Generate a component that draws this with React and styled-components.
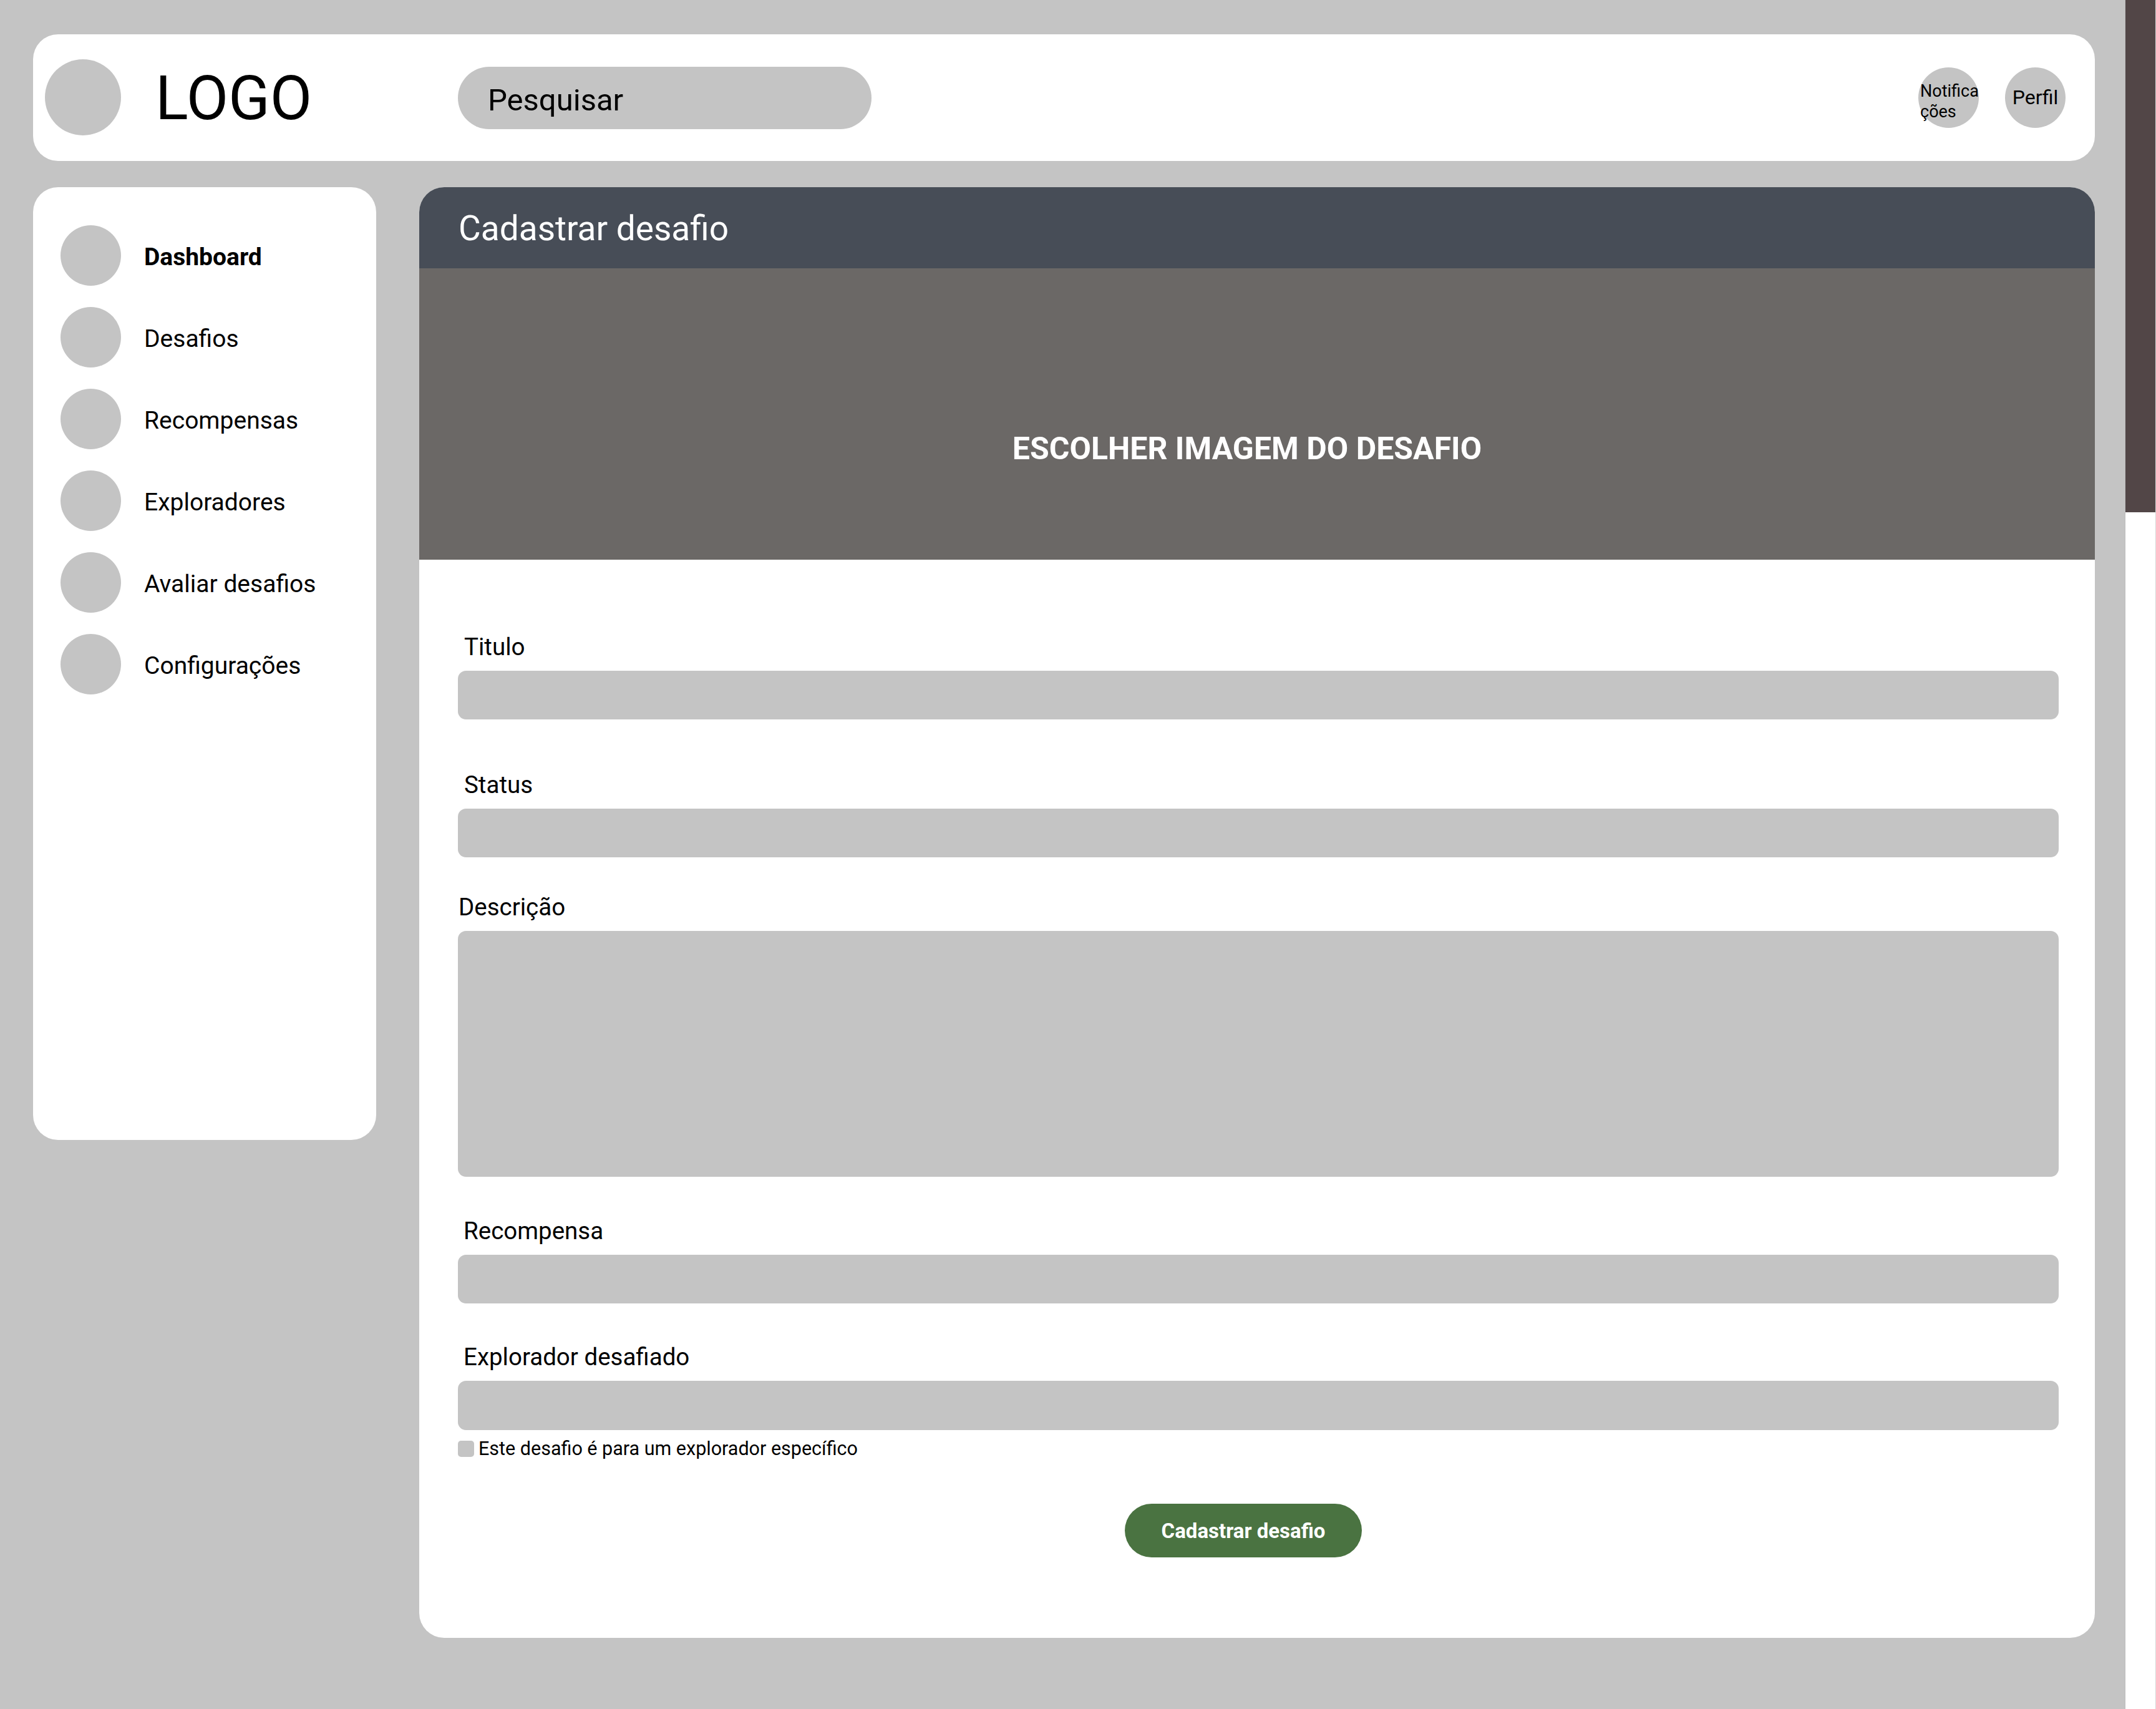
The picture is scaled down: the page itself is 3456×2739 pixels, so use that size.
import styled, { createGlobalStyle } from 'styled-components';

const GlobalStyle = createGlobalStyle`
  * { box-sizing: border-box; }
  body {
    margin: 0;
    font-family: Roboto, "Noto Sans", "Liberation Sans", sans-serif;
    color: #000000;
    background: #ffffff;
  }
`;

const menuItems = [
  { label: 'Dashboard', active: true },
  { label: 'Desafios' },
  { label: 'Recompensas' },
  { label: 'Exploradores' },
  { label: 'Avaliar desafios' },
  { label: 'Configurações' },
];

export default function App() {
  return (
    <>
      <GlobalStyle />
      <StyledPage>
        <StyledMain>
          <StyledTopBar>
            <StyledBrand>
              <StyledLogoCircle />
              <StyledLogoText>LOGO</StyledLogoText>
            </StyledBrand>
            <StyledSearch>Pesquisar</StyledSearch>
            <StyledActions>
              <StyledActionCircle $small>
                Notifica
                <br />
                ções
              </StyledActionCircle>
              <StyledActionCircle $center>Perfil</StyledActionCircle>
            </StyledActions>
          </StyledTopBar>

          <StyledBody>
            <StyledSidebar>
              {menuItems.map((item) => (
                <StyledMenuItem key={item.label} $active={item.active}>
                  <span className="menu-icon" />
                  <span className="menu-label">{item.label}</span>
                </StyledMenuItem>
              ))}
            </StyledSidebar>

            <StyledPanel>
              <StyledPanelHeader>Cadastrar desafio</StyledPanelHeader>
              <StyledImagePicker>ESCOLHER IMAGEM DO DESAFIO</StyledImagePicker>
              <StyledForm>
                <StyledField $top={118}>
                  <StyledLabel $indent={10}>Titulo</StyledLabel>
                  <StyledInput />
                </StyledField>
                <StyledField $top={83}>
                  <StyledLabel $indent={10}>Status</StyledLabel>
                  <StyledInput />
                </StyledField>
                <StyledField $top={58}>
                  <StyledLabel $indent={1}>Descrição</StyledLabel>
                  <StyledInput $height={394} />
                </StyledField>
                <StyledField $top={65}>
                  <StyledLabel $indent={9}>Recompensa</StyledLabel>
                  <StyledInput />
                </StyledField>
                <StyledField $top={64}>
                  <StyledLabel $indent={9}>Explorador desafiado</StyledLabel>
                  <StyledInput $height={79} />
                </StyledField>
                <StyledCheckRow>
                  <span className="check-box" />
                  Este desafio é para um explorador específico
                </StyledCheckRow>
                <StyledButtonRow>
                  <StyledSubmit>Cadastrar desafio</StyledSubmit>
                </StyledButtonRow>
              </StyledForm>
            </StyledPanel>
          </StyledBody>
        </StyledMain>

        <StyledScrollTrack>
          <span className="thumb" />
        </StyledScrollTrack>
      </StyledPage>
    </>
  );
}

const StyledPage = styled.div`
  display: flex;
  width: 100%;
  height: 2739px;
  overflow: hidden;
`;

const StyledMain = styled.div`
  flex: 1;
  background: #c4c4c4;
  padding: 55px 48px 0 53px;
`;

const StyledTopBar = styled.header`
  height: 203px;
  background: #ffffff;
  border-radius: 40px;
  display: flex;
  align-items: center;
  padding: 0 47px 0 19px;
`;

const StyledBrand = styled.div`
  width: 662px;
  flex-shrink: 0;
  display: flex;
  align-items: center;
  gap: 55px;
`;

const StyledLogoCircle = styled.div`
  width: 122px;
  height: 122px;
  border-radius: 50%;
  background: #c4c4c4;
  margin-top: -2px;
`;

const StyledLogoText = styled.span`
  font-size: 98px;
  line-height: 1;
  font-weight: 400;
  margin-top: 2px;
`;

const StyledSearch = styled.div`
  width: 663px;
  height: 100px;
  border-radius: 50px;
  background: #c4c4c4;
  display: flex;
  align-items: center;
  padding: 8px 0 0 48px;
  font-size: 49px;
`;

const StyledActions = styled.div`
  margin-left: auto;
  display: flex;
  align-items: center;
  gap: 42px;
`;

const StyledActionCircle = styled.div`
  width: 97px;
  height: 97px;
  border-radius: 50%;
  background: #c4c4c4;
  display: flex;
  align-items: center;
  justify-content: ${(p) => (p.$center ? 'center' : 'flex-start')};
  white-space: nowrap;
  font-size: ${(p) => (p.$small ? '27px' : '32px')};
  line-height: ${(p) => (p.$small ? '33px' : '1')};
  padding: ${(p) => (p.$small ? '12px 0 0 3px' : '0 0 2px 0')};
`;

const StyledBody = styled.div`
  display: flex;
  align-items: flex-start;
  gap: 69px;
  margin-top: 42px;
`;

const StyledSidebar = styled.nav`
  width: 550px;
  height: 1527px;
  flex-shrink: 0;
  background: #ffffff;
  border-radius: 40px;
  padding: 61px 0 0 44px;
  display: flex;
  flex-direction: column;
  gap: 34px;
`;

const StyledMenuItem = styled.div`
  display: flex;
  align-items: center;
  gap: 38px;
  height: 97px;
  font-size: 39px;
  font-weight: ${(p) => (p.$active ? 700 : 400)};
  .menu-icon {
    width: 97px;
    height: 97px;
    border-radius: 50%;
    background: #c4c4c4;
    flex-shrink: 0;
  }
  .menu-label {
    padding-top: 4px;
    margin-left: -1px;
  }
`;

const StyledPanel = styled.section`
  flex: 1;
  height: 2325px;
  background: #ffffff;
  border-radius: 40px;
  overflow: hidden;
`;

const StyledPanelHeader = styled.h1`
  margin: 0;
  height: 130px;
  background: #474d57;
  color: #ffffff;
  display: flex;
  align-items: center;
  padding: 2px 0 0 63px;
  font-size: 55px;
  font-weight: 400;
`;

const StyledImagePicker = styled.div`
  height: 467px;
  background: #6b6866;
  color: #ffffff;
  display: flex;
  align-items: center;
  justify-content: center;
  padding: 110px 32px 0 0;
  font-size: 50px;
  font-weight: 700;
`;

const StyledForm = styled.form`
  padding: 0 58px 0 62px;
  display: flex;
  flex-direction: column;
`;

const StyledField = styled.div`
  display: flex;
  flex-direction: column;
  gap: 16px;
  margin-top: ${(p) => p.$top}px;
`;

const StyledLabel = styled.label`
  font-size: 38.5px;
  line-height: 44px;
  padding-left: ${(p) => p.$indent}px;
`;

const StyledInput = styled.div`
  height: ${(p) => p.$height || 78}px;
  background: #c4c4c4;
  border-radius: 13px;
`;

const StyledCheckRow = styled.div`
  display: flex;
  align-items: center;
  gap: 7px;
  margin-top: 15px;
  font-size: 30.5px;
  line-height: 30px;
  .check-box {
    width: 26px;
    height: 26px;
    border-radius: 5px;
    background: #c4c4c4;
  }
`;

const StyledButtonRow = styled.div`
  display: flex;
  justify-content: center;
  padding-right: 48px;
  margin-top: 73px;
`;

const StyledSubmit = styled.button`
  width: 380px;
  height: 86px;
  border: none;
  border-radius: 43px;
  background: #4a7341;
  color: #ffffff;
  font-family: Roboto, "Liberation Sans", sans-serif;
  font-size: 33px;
  font-weight: 700;
  cursor: pointer;
`;

const StyledScrollTrack = styled.div`
  width: 50px;
  flex-shrink: 0;
  background: #ffffff;
  border-left: 1px solid #bdbdbd;
  border-right: 1px solid #d6d6d6;
  .thumb {
    display: block;
    height: 821px;
    background: #524647;
  }
`;
